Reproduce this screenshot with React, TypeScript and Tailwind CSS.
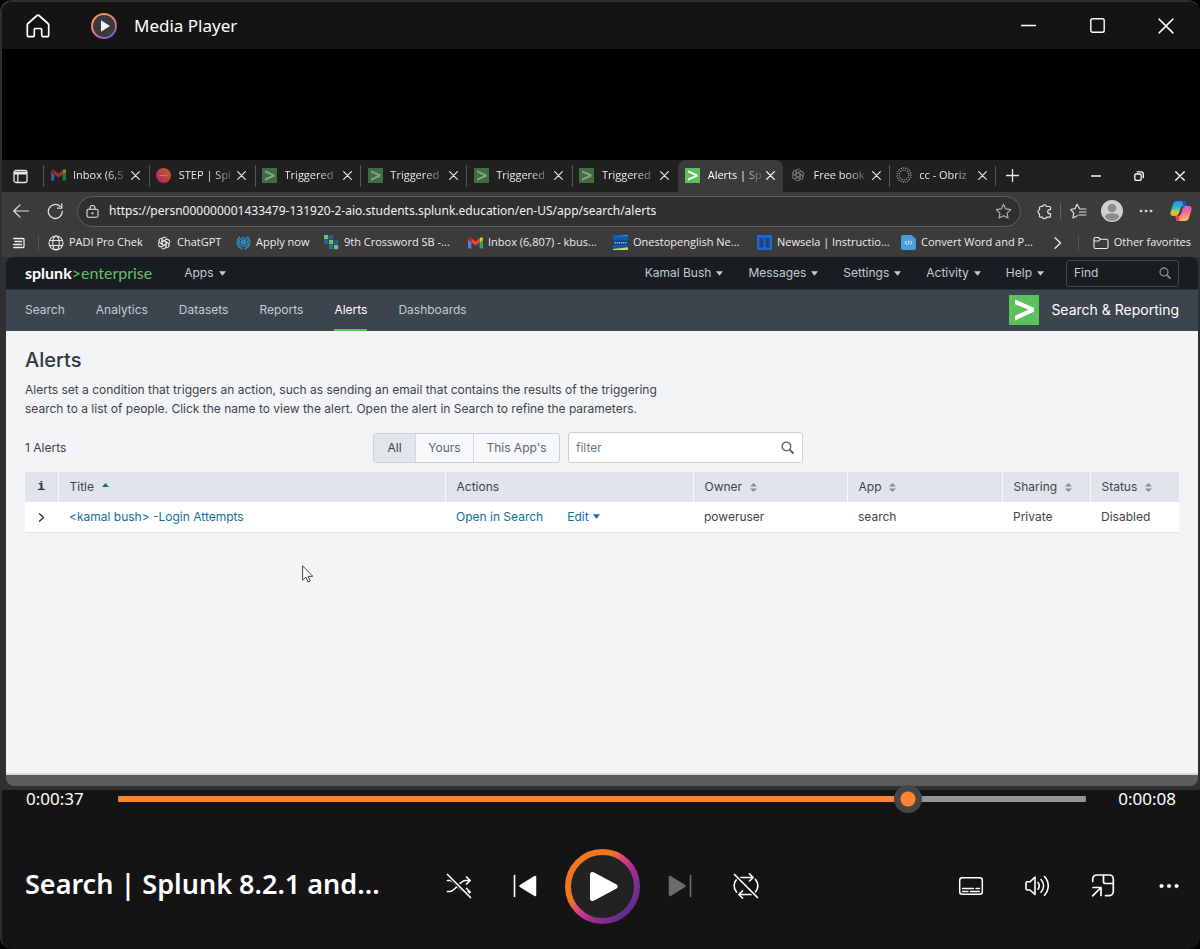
import React from "react";

const UI = "font-['Open_Sans','Noto_Sans',sans-serif]";
const WEB = "font-['Inter','Liberation_Sans',sans-serif]";

type IconProps = { className?: string; children: React.ReactNode; size?: number; box?: number; stroke?: number };

function Icon({ className = "", children, size = 24, box = 24, stroke = 1 }: IconProps) {
  return (
    <svg
      aria-hidden="true"
      width={size}
      height={size}
      viewBox={`0 0 ${box} ${box}`}
      fill="none"
      stroke="currentColor"
      strokeWidth={stroke}
      strokeLinecap="round"
      strokeLinejoin="round"
      className={`shrink-0 ${className}`}
    >
      {children}
    </svg>
  );
}

function CloseIcon({ size = 9, stroke = 1.3 }: { size?: number; stroke?: number }) {
  return (
    <Icon size={size} box={10} stroke={stroke}>
      <path d="M.7.7l8.6 8.6M9.3.7L.7 9.3" />
    </Icon>
  );
}

function Gmail({ dim = false }: { dim?: boolean }) {
  return (
    <svg aria-hidden="true" width="15" height="12" viewBox="0 0 15 12" className={`shrink-0 ${dim ? "opacity-60" : ""}`}>
      <path d="M0 2v8.5c0 .6.4 1 1 1h2.4V4.7z" fill="#4285f4" />
      <path d="M15 2v8.5c0 .6-.4 1-1 1h-2.4V4.7z" fill="#34a853" />
      <path d="M11.6 1.5v3.9L15 2.9V2c0-1.600-1.600-2.200-2.700-1.300z" fill="#fbbc04" />
      <path d="M0 2v.9l3.400 2.500V1.500l-.7-.8C1.600-.2 0 .4 0 2z" fill="#c5221f" />
      <path d="M3.400 5.400V1.300l4.100 3.100 4.100-3.100v4.100L7.500 8.500z" fill="#ea4335" />
    </svg>
  );
}

function SplunkIcon({ dim = false, size = 15 }: { dim?: boolean; size?: number }) {
  return (
    <svg aria-hidden="true" width={size} height={size} viewBox="0 0 30 30" className="shrink-0">
      <path d="M0 0h30v30H0z" fill={dim ? "#3b6f3f" : "#5cc05c"} />
      <path d="M6 4.500L25 12.800v4L6 25.500v-4.700l13.500-6L6 9.200z" fill={dim ? "#8f9a90" : "#fff"} />
    </svg>
  );
}

function Step() {
  return (
    <svg aria-hidden="true" width="15" height="15" viewBox="0 0 15 15" className="shrink-0">
      <defs>
        <linearGradient id="step" x1="0" y1="1" x2="1" y2="0">
          <stop offset="0" stopColor="#a81f68" />
          <stop offset="1" stopColor="#c8641c" />
        </linearGradient>
      </defs>
      <circle cx="7.500" cy="7.500" r="7.500" fill="url(#step)" />
      <path d="M3.500 7.500h8" stroke="#d8906c" strokeWidth="1.200" strokeDasharray="1.300 .6" />
    </svg>
  );
}

function Knot({ dim = false }: { dim?: boolean }) {
  return (
    <Icon size={14} box={24} stroke={1.700} className={dim ? "text-[#777777]" : "text-[#e4e4e4]"}>
      {[0, 60, 120, 180, 240, 300].map((a) => (
        <path key={a} transform={`rotate(${a} 12 12)`} d="M8.500 14V6.500A4.500 4.500 0 0 1 16.800 4M8.500 10l6.500-3.700a4.500 4.500 0 0 1 5 .5" />
      ))}
    </Icon>
  );
}

function Obriz() {
  return (
    <Icon size={16} box={16} stroke={1.300} className="text-[#8c8c8c]">
      <circle cx="8" cy="8" r="7" strokeDasharray=".3 2" />
      <circle cx="8" cy="8" r="4.800" strokeDasharray=".3 2" />
    </Icon>
  );
}

function Globe() {
  return (
    <Icon size={16} box={16} className="text-[#e6e6e6]" stroke={1.100}>
      <circle cx="8" cy="8" r="7" />
      <ellipse cx="8" cy="8" rx="3.200" ry="7" />
      <path d="M1.500 5.500h13M1.500 10.500h13" />
    </Icon>
  );
}

function Nations() {
  return (
    <Icon size={15} box={16} className="text-[#2c86b8]" stroke={1.100}>
      <circle cx="8" cy="7.500" r="4.600" />
      <circle cx="8" cy="7.500" r="2.200" />
      <path d="M8 3v9M3.500 7.500h9M5 4.500l6 6M11 4.500l-6 6" />
      <path d="M3.500 2.500C.3 6 1 12 6 14.500M12.500 2.500c3.200 3.500 2.500 9.500-2.500 12" strokeWidth="2" />
    </Icon>
  );
}

function Crossword() {
  const cells: [number, number, string][] = [
    [0, 0, "#6cbf84"], [5, 0, "#2c5f84"], [5, 5, "#6cbf84"], [0, 5, "#2c5f84"],
    [10, 5, "#2c5f84"], [5, 10, "#2c6f9c"], [10, 10, "#6cbf84"],
  ];
  return (
    <svg aria-hidden="true" width="15" height="15" viewBox="0 0 15 15" className="shrink-0">
      {cells.map(([x, y, c]) => (
        <path key={`${x}-${y}`} d={`M${x} ${y}h4.200v4.200h-4.200z`} fill={c} />
      ))}
    </svg>
  );
}

function Onestop() {
  return (
    <svg aria-hidden="true" width="15" height="15" viewBox="0 0 15 15" className="shrink-0">
      <path d="M0 0h15v15H0z" fill="#0c5cae" />
      <path d="M0 5.500h15v4.500H0z" fill="#0a3f80" />
      <path d="M0 1.500L15 0v1z" fill="#4aa0e0" />
      <path d="M0 15v-1l15-1.800V15z" fill="#b9dc6a" />
      <path d="M1.500 7.800h12" stroke="#b7d3ee" strokeWidth="1.200" strokeDasharray="1.500 .6" />
    </svg>
  );
}

function Newsela() {
  return (
    <svg aria-hidden="true" width="15" height="15" viewBox="0 0 15 15" className="shrink-0">
      <path d="M0 0h15v15H0z" fill="#1b66e0" />
      <path d="M2.500 3h4v9.500h-4zM8.500 3h4v9.500h-4z" fill="#27406e" />
    </svg>
  );
}

function CodeFile() {
  return (
    <svg aria-hidden="true" width="15" height="15" viewBox="0 0 15 15" className="shrink-0">
      <path d="M2 0h8.500L15 4v9a2 2 0 0 1-2 2H2a2 2 0 0 1-2-2V2a2 2 0 0 1 2-2z" fill="#4a9ddb" />
      <path d="M5.500 6L4 7.700l1.500 1.700M9.500 6L11 7.700 9.500 9.400M8 5.800L7 9.600" stroke="#fff" strokeWidth=".9" fill="none" />
    </svg>
  );
}

function Caret() {
  return (
    <svg aria-hidden="true" width="7" height="5" viewBox="0 0 7 5" className="shrink-0 fill-current">
      <path d="M0 .2h7L3.500 4.800z" />
    </svg>
  );
}

function SortIcon() {
  return (
    <svg aria-hidden="true" width="7" height="9" viewBox="0 0 7 9" className="shrink-0 fill-[#818d99]">
      <path d="M0 3.600h7L3.500 0zM0 5.400h7L3.500 9z" />
    </svg>
  );
}

function SearchIcon({ size = 13 }: { size?: number }) {
  return (
    <Icon size={size} box={13} stroke={1.400}>
      <circle cx="5.400" cy="5.400" r="4.300" />
      <path d="M8.700 8.700l3.300 3.300" strokeWidth="2" />
    </Icon>
  );
}

function TitleBar() {
  return (
    <header className="flex h-[47px] items-center bg-[#141414] text-white">
      <button aria-label="Home" className="ml-[18px] flex h-9 w-9 items-center justify-center">
        <Icon size={24} stroke={1.700}>
          <path d="M11 1.500a1.600 1.600 0 0 1 2 0l9 8c.5.400.7 1 .7 1.600V21a1.700 1.700 0 0 1-1.700 1.700h-3.300A1.700 1.700 0 0 1 15.700 21v-5.300c0-.7-.500-1.200-1.200-1.200h-5c-.7 0-1.200.5-1.200 1.200V21a1.700 1.700 0 0 1-1.700 1.700H3A1.700 1.700 0 0 1 1.300 21v-9.900c0-.6.200-1.200.7-1.600z" />
        </Icon>
      </button>
      <svg aria-hidden="true" width="26" height="26" viewBox="0 0 26 26" className="ml-[35px] shrink-0">
        <defs>
          <linearGradient id="app" x1=".2" y1="0" x2=".8" y2="1">
            <stop offset="0" stopColor="#ff9340" />
            <stop offset=".5" stopColor="#d97a8c" />
            <stop offset="1" stopColor="#7a55c8" />
          </linearGradient>
        </defs>
        <circle cx="13" cy="13" r="12" fill="#3a3a3c" stroke="url(#app)" strokeWidth="2" />
        <path d="M10 7.200v11.600l9-5.800z" fill="#f2f2f2" />
      </svg>
      <h1 className="ml-[17px] flex-1 font-['Noto_Sans',sans-serif] text-[17px]">Media Player</h1>
      <button aria-label="Minimize" className="flex h-full w-[69px] items-center justify-center">
        <Icon size={15} box={15} stroke={1.400}><path d="M.5 7.500h14" /></Icon>
      </button>
      <button aria-label="Maximize" className="flex h-full w-[69px] items-center justify-center">
        <Icon size={15} box={15} stroke={1.400}><rect x=".8" y=".8" width="13.400" height="13.400" rx="1.800" /></Icon>
      </button>
      <button aria-label="Close" className="flex h-full w-[68px] items-center justify-center">
        <CloseIcon size={16} stroke={0.900} />
      </button>
    </header>
  );
}

const tabs: { label: string; icon: React.ReactNode; active?: boolean }[] = [
  { label: "Inbox (6,5", icon: <Gmail dim /> },
  { label: "STEP | Spl", icon: <Step /> },
  { label: "Triggered", icon: <SplunkIcon dim /> },
  { label: "Triggered", icon: <SplunkIcon dim /> },
  { label: "Triggered", icon: <SplunkIcon dim /> },
  { label: "Triggered", icon: <SplunkIcon dim /> },
  { label: "Alerts | Sp", icon: <SplunkIcon />, active: true },
  { label: "Free book", icon: <Knot dim /> },
  { label: "cc - Obriz", icon: <Obriz /> },
];

function TabStrip() {
  return (
    <div className="flex h-8 items-center bg-[#202020] text-[#e8e8e8]">
      <button aria-label="Tab actions" className="flex h-8 w-[37px] shrink-0 items-center justify-center">
        <Icon size={15} box={15} stroke={1.300}>
          <rect x="1" y="1.500" width="13" height="12" rx="2" />
          <path d="M1.500 3.500h12M1.500 4.800h12M4.800 5v8.500" />
        </Icon>
      </button>
      <div className="ml-1 flex h-8 min-w-0 max-w-[953px] flex-1 items-center">
        {tabs.map((t, i) => (
          <div
            key={i}
            className={
              t.active
                ? "flex h-8 min-w-0 flex-1 items-center rounded-t-lg border-l border-[#3b3b3b] bg-[#3b3b3b] pr-2 pb-[2px] pl-[6px] text-white"
                : `flex h-[22px] min-w-0 flex-1 items-center border-l pr-2 pb-[2px] pl-[6px] ${tabs[i - 1]?.active ? "border-transparent" : "border-[#555]"}`
            }
          >
            <span className="flex w-4 shrink-0 justify-center">{t.icon}</span>
            <span className="ml-[7px] min-w-0 flex-1 whitespace-nowrap text-[11px] [mask-image:linear-gradient(to_right,black_60%,rgba(0,0,0,0.2)_90%)]">
              {t.label}
            </span>
            <button aria-label="Close tab" className="flex w-[10px] shrink-0 justify-center">
              <CloseIcon />
            </button>
          </div>
        ))}
        <span className="h-5 border-l border-[#555]" />
      </div>
      <button aria-label="New tab" className="flex h-8 w-8 shrink-0 items-center justify-center pb-[2px]">
        <Icon size={13} box={13} stroke={1.300}><path d="M6.500.5v12M.5 6.500h12" /></Icon>
      </button>
      <div className="ml-auto flex shrink-0 text-white">
        <button aria-label="Minimize browser" className="flex h-8 w-[43px] items-center justify-center">
          <Icon size={10} box={10} stroke={1.400}><path d="M.5 5h9" /></Icon>
        </button>
        <button aria-label="Restore browser" className="flex h-8 w-[43px] items-center justify-center">
          <Icon size={10} box={10} stroke={1.300}>
            <rect x=".8" y="3" width="6.400" height="6.400" rx="1.300" />
            <path d="M3.200.8h3.800a2.300 2.300 0 0 1 2.300 2.300v3.600" />
          </Icon>
        </button>
        <button aria-label="Close browser" className="flex h-8 w-10 items-center justify-center">
          <CloseIcon size={10} />
        </button>
      </div>
    </div>
  );
}

function AddressBar() {
  return (
    <div className="flex h-[38px] items-center bg-[#3b3b3b] text-[#e2e2e2]">
      <button aria-label="Back" className="flex h-8 w-[37px] shrink-0 items-center justify-center">
        <Icon size={16} box={16} stroke={1.200}><path d="M15.500 8H1M7 1.800L.8 8 7 14.200" /></Icon>
      </button>
      <button aria-label="Refresh" className="flex h-8 w-[32px] shrink-0 items-center justify-center">
        <Icon size={17} box={17} stroke={1.300}><path d="M15.300 8.500A7 7 0 1 1 13 3.300M14.800 1v4.200h-4.200" /></Icon>
      </button>
      <div className="ml-[6px] flex h-[31px] min-w-0 flex-1 items-center rounded-full border border-[#5e5e5e] bg-[#303030] pl-2 pr-2">
        <Icon size={13} box={13} stroke={1.100}>
          <rect x="1" y="4.300" width="11" height="8" rx="1.500" />
          <path d="M4 4.300V3a2.500 2.500 0 0 1 5 0v1.300" />
          <circle cx="6.500" cy="8.300" r=".5" fill="currentColor" />
        </Icon>
        <label htmlFor="url" className="sr-only">Address</label>
        <input
          id="url"
          className="ml-[10px] min-w-0 flex-1 bg-transparent font-['Noto_Sans',sans-serif] text-[12px] text-[#f2f2f2] outline-none"
          defaultValue="https://persn000000001433479-131920-2-aio.students.splunk.education/en-US/app/search/alerts"
        />
        <button aria-label="Add to favorites" className="text-[#b0b0b0]">
          <Icon size={17} box={17} stroke={1.100}>
            <path d="M8.500 1.300l2.200 4.600 5 .7-3.600 3.500.9 5-4.500-2.400-4.500 2.400.9-5L1.300 6.600l5-.7z" />
          </Icon>
        </button>
      </div>
      <button aria-label="Extensions" className="ml-[15px] shrink-0">
        <Icon size={17} box={17} stroke={1.200}>
          <path d="M4.500 3.500h1.800a2.200 2.200 0 0 1 4.200 0h3a1 1 0 0 1 1 1v2.200h-.8a2 2 0 0 0 0 4h.8v2.500a1 1 0 0 1-1 1h-3a2.200 2.200 0 0 1-4.200 0H4.500a1 1 0 0 1-1-1v-2.500a2.100 2.100 0 0 1 0-4V4.500a1 1 0 0 1 1-1z" />
        </Icon>
      </button>
      <span className="ml-[7px] h-4 border-l border-[#606060]" />
      <button aria-label="Favorites" className="ml-[9px] shrink-0">
        <Icon size={17} box={17} stroke={1.200}>
          <path d="M9.500 5.500L7 1.300 5 5.700l-4.300.8 3 3.300-.7 5.200 4.200-2.300" />
          <path d="M10 6h6M9.500 9h6.500M8.800 12h7.200" />
        </Icon>
      </button>
      <button aria-label="Profile" className="ml-[14px] shrink-0">
        <svg aria-hidden="true" width="22" height="22" viewBox="0 0 22 22">
          <circle cx="11" cy="11" r="11" fill="#cfcfcf" />
          <circle cx="11" cy="8" r="4.300" fill="#8c8c8c" />
          <path d="M4 17c0-3 2.500-3.500 7-3.500s7 .5 7 3.500c-1.500 2.300-4 3.800-7 3.800S5.500 19.300 4 17z" fill="#8c8c8c" />
        </svg>
      </button>
      <button aria-label="Browser menu" className="ml-4 shrink-0">
        <Icon size={14} box={14} stroke={0.500}>
          <g fill="currentColor"><circle cx="2" cy="7" r="1.100" /><circle cx="7" cy="7" r="1.100" /><circle cx="12" cy="7" r="1.100" /></g>
        </Icon>
      </button>
      <button aria-label="Copilot" className="mr-2 ml-[17px] shrink-0">
        <svg aria-hidden="true" width="22" height="20" viewBox="0 0 22 20">
          <defs>
            <linearGradient id="cpa" x1="0" y1="0" x2="0" y2="1">
              <stop offset="0" stopColor="#1a8fe8" /><stop offset=".45" stopColor="#35b6c8" />
              <stop offset=".75" stopColor="#c8d040" /><stop offset="1" stopColor="#f59a2c" />
            </linearGradient>
            <linearGradient id="cpb" x1="0" y1="0" x2=".3" y2="1">
              <stop offset="0" stopColor="#b06cf0" /><stop offset=".5" stopColor="#f0609c" /><stop offset="1" stopColor="#ffb070" />
            </linearGradient>
          </defs>
          <path d="M7 0h6.500c1.500 0 2 1 2.300 2l.7 3h-3c-1.500 0-2.300.8-2.800 2.300L8.500 13c-.5 1.300-1.200 2-2.500 2H3c-2 0-3-1.500-2.500-3.500L3 3C3.700 1 5 0 7 0z" fill="url(#cpa)" />
          <path d="M15 20H8.500c-1.500 0-2-1-2.300-2l-.7-3h2.500c1.500 0 2.300-.8 2.800-2.300L13 7c.5-1.300 1.200-2 2.500-2H19c2 0 3 1.500 2.500 3.500L19 17c-.7 2-2 3-4 3z" fill="url(#cpb)" />
          <path d="M12 0h1.500c1.500 0 2 1 2.300 2l.7 3h-3z" fill="#1d4fc8" />
          <path d="M5.500 15H8.700L9.500 20H8.500c-1.500 0-2-1-2.300-2z" fill="#e8482c" />
        </svg>
      </button>
    </div>
  );
}

const bookmarks: { label: string; icon: React.ReactNode; width: string }[] = [
  { label: "PADI Pro Chek", icon: <Globe />, width: "w-[108px]" },
  { label: "ChatGPT", icon: <Knot />, width: "w-[79px]" },
  { label: "Apply now", icon: <Nations />, width: "w-[88px]" },
  { label: "9th Crossword SB -...", icon: <Crossword />, width: "w-[144px]" },
  { label: "Inbox (6,807) - kbus...", icon: <Gmail />, width: "w-[145px]" },
  { label: "Onestopenglish Ne...", icon: <Onestop />, width: "w-[144px]" },
  { label: "Newsela | Instructio...", icon: <Newsela />, width: "w-[144px]" },
  { label: "Convert Word and P...", icon: <CodeFile />, width: "w-[146px]" },
];

function BookmarksBar() {
  return (
    <nav aria-label="Favorites bar" className="flex h-[27px] items-center bg-[#3b3b3b] pb-[2px] text-[11px] text-[#ededed]">
      <button aria-label="Collections" className="ml-[11px] shrink-0">
        <Icon size={12} box={12} stroke={1.300}><path d="M.7 1.500h9.300a1 1 0 0 1 1 1v7a1 1 0 0 1-1 1H.7M2 4.500h6.500M.7 7.500h7.800" /></Icon>
      </button>
      <span className="mr-[9px] ml-[13px] h-4 border-l border-[#555]" />
      <div className="flex min-w-0 flex-1 items-center overflow-hidden">
        {bookmarks.map((b) => (
          <a key={b.label} href="#" className={`flex shrink-0 items-center gap-[5px] whitespace-nowrap ${b.width}`}>
            <span className="flex w-4 shrink-0 justify-center">{b.icon}</span>
            {b.label}
          </a>
        ))}
      </div>
      <button aria-label="More favorites" className="shrink-0">
        <Icon size={12} box={12} stroke={1.300}><path d="M3 .8L8.500 6 3 11.200" /></Icon>
      </button>
      <span className="ml-[14px] h-4 border-l border-[#555]" />
      <a href="#" className="mr-[9px] ml-[14px] flex shrink-0 items-center gap-[5px] whitespace-nowrap">
        <Icon size={16} box={16} stroke={1.100}>
          <path d="M1 4a1.500 1.500 0 0 1 1.500-1.500h3L7.300 4.200h6.200A1.500 1.500 0 0 1 15 5.700V12a1.500 1.500 0 0 1-1.500 1.500h-11A1.500 1.500 0 0 1 1 12zM1 6h4.800l1.500-1.800" />
        </Icon>
        Other favorites
      </a>
    </nav>
  );
}

const menus = ["Kamal Bush", "Messages", "Settings", "Activity", "Help"];
const sections = ["Search", "Analytics", "Datasets", "Reports", "Alerts", "Dashboards"];

function SplunkHeader() {
  return (
    <>
      <div className="flex h-8 items-center rounded-t-lg bg-[#171d21] px-[19px] text-[12px] text-[#c3cbd4]">
        <a href="#" className="font-['Lato',sans-serif] text-[16px] leading-5 text-[#65c066]">
          <span className="font-bold text-white">splunk</span>&gt;enterprise
        </a>
        <button className="ml-8 flex items-center gap-[5px]">Apps <Caret /></button>
        <div className="ml-auto flex items-center gap-[25px]">
          {menus.map((m) => (
            <button key={m} className="flex items-center gap-[5px] whitespace-nowrap">{m} <Caret /></button>
          ))}
        </div>
        <div className="ml-[22px] flex h-[27px] w-[113px] items-center rounded-[3px] border border-[#3f484f] px-[7px] text-[#818d99]">
          <label htmlFor="find" className="sr-only">Find</label>
          <input id="find" placeholder="Find" className="min-w-0 flex-1 bg-transparent outline-none placeholder:text-[#c3cbd4]" />
          <SearchIcon size={12} />
        </div>
      </div>
      <nav aria-label="App" className="flex h-[42px] items-stretch border-t border-[#2c343b] bg-[#3c444d] px-[19px] text-[12px] text-[#c3cbd4]">
        <div className="flex gap-[31px]">
          {sections.map((s) => (
            <a
              key={s}
              href="#"
              className={
                s === "Alerts"
                  ? "flex items-center border-b-2 border-[#65c066] text-white"
                  : "flex items-center border-b-2 border-transparent"
              }
            >
              {s}
            </a>
          ))}
        </div>
        <a href="#" className="ml-auto flex items-center gap-3 border-b-2 border-transparent text-[14px] text-white">
          <SplunkIcon size={30} />
          Search &amp; Reporting
        </a>
      </nav>
    </>
  );
}

function Th({ children, className = "" }: { children: React.ReactNode; className?: string }) {
  return (
    <th scope="col" className={`border-l border-[#f8f9fa] px-[11px] text-left font-normal ${className}`}>
      {children}
    </th>
  );
}

function Sortable({ label }: { label: string }) {
  return <button className="flex items-center gap-2">{label} <SortIcon /></button>;
}

function AlertsPage() {
  return (
    <section className="relative flex-1 border-b-2 border-[#d6d9db] bg-[#f2f4f5] px-[19px] pt-[16px] text-[12px] text-[#3c444d]">
      <h2 className="text-[20px] leading-[26px] font-medium text-[#2f3940]">Alerts</h2>
      <p className="mt-[7px] max-w-[660px] leading-[19px]">
        Alerts set a condition that triggers an action, such as sending an email that contains the results of the triggering
        <br />
        search to a list of people. Click the name to view the alert. Open the alert in Search to refine the parameters.
      </p>
      <div className="mt-[14px] flex items-center">
        <span className="w-[348px]">1 Alerts</span>
        <div className="flex h-[30px] overflow-hidden rounded-[3px] border border-[#c9d0d8] bg-[#f7f8fa] text-[#5c6773]">
          <button className="w-[41px] bg-[#e1e6eb] text-[#3c444d]">All</button>
          <button className="w-[58px] border-l border-[#d3d8de]">Yours</button>
          <button className="w-[86px] border-l border-[#d3d8de]">This App&apos;s</button>
        </div>
        <div className="ml-2 flex h-[31px] w-[235px] items-center rounded-[3px] border border-[#c9d0d8] bg-white pr-2 pl-[7px] text-[#5c6773]">
          <label htmlFor="filter" className="sr-only">Filter alerts</label>
          <input id="filter" placeholder="filter" className="min-w-0 flex-1 bg-transparent outline-none placeholder:text-[#6b7785]" />
          <SearchIcon />
        </div>
      </div>
      <table className="mt-[9px] w-full table-fixed border-collapse">
        <colgroup>
          <col className="w-[33px]" />
          <col />
          <col className="w-[248px]" />
          <col className="w-[154px]" />
          <col className="w-[155px]" />
          <col className="w-[88px]" />
          <col className="w-[89px]" />
        </colgroup>
        <thead>
          <tr className="h-[30px] bg-[#e1e5eb]">
            <th scope="col" className="text-center font-['Liberation_Mono',monospace] text-[13px] font-bold text-[#2b3033]">i</th>
            <Th>
              <button className="flex items-center gap-2">
                Title
                <svg aria-hidden="true" width="7" height="4" viewBox="0 0 7 4" className="mb-1 fill-[#0c6c9c]"><path d="M0 4h7L3.500 0z" /></svg>
              </button>
            </Th>
            <Th>Actions</Th>
            <Th><Sortable label="Owner" /></Th>
            <Th><Sortable label="App" /></Th>
            <Th><Sortable label="Sharing" /></Th>
            <Th><Sortable label="Status" /></Th>
          </tr>
        </thead>
        <tbody>
          <tr className="h-[30px] border-b border-[#e1e5eb] bg-white">
            <td className="text-center">
              <button aria-label="Expand row" className="align-middle text-[#2b3033]">
                <Icon size={9} box={9} stroke={1.300}><path d="M2.500.8L6.500 4.500l-4 3.700" /></Icon>
              </button>
            </td>
            <td className="px-[11px]"><a href="#" className="text-[#0f6e9f]">&lt;kamal bush&gt; -Login Attempts</a></td>
            <td className="px-[11px]">
              <div className="flex items-center gap-6 text-[#0f6e9f]">
                <a href="#">Open in Search</a>
                <button className="flex items-center gap-1">Edit <Caret /></button>
              </div>
            </td>
            <td className="px-[11px]">poweruser</td>
            <td className="px-[11px]">search</td>
            <td className="px-[11px]">Private</td>
            <td className="px-[11px]">Disabled</td>
          </tr>
        </tbody>
      </table>
      <svg aria-hidden="true" width="12" height="18" viewBox="0 0 12 18" className="absolute top-[234px] left-[296px]">
        <path d="M.6.800v14.400l3.300-3.100 2.100 5 2.200-1-2.100-4.800h4.700z" fill="#fff" stroke="#333" strokeWidth=".9" />
      </svg>
    </section>
  );
}

const ctl = "flex h-12 w-[52px] shrink-0 items-center justify-center";

function Controls() {
  const position = 826;
  const track = {
    background: `linear-gradient(to right, #ff8432 ${position / 10}%, #959595 ${position / 10}%) center / 100% 6px no-repeat`,
  };
  return (
    <footer className="bg-[#141414] text-white">
      <div className="flex h-[18px] items-center px-6 font-['Noto_Sans',sans-serif] text-[17px]">
        <label htmlFor="seek" className="w-[92px] shrink-0">0:00:37</label>
        <input
          id="seek"
          type="range"
          min={0}
          max={1000}
          defaultValue={position}
          style={track}
          className="relative h-7 min-w-0 flex-1 appearance-none rounded-full [&::-webkit-slider-thumb]:h-7 [&::-webkit-slider-thumb]:w-7 [&::-webkit-slider-thumb]:appearance-none [&::-webkit-slider-thumb]:rounded-full [&::-webkit-slider-thumb]:bg-[radial-gradient(circle,#ff8432_7px,#454545_8px)]"
        />
        <span className="w-[90px] shrink-0 text-right">0:00:08</span>
      </div>
      <div className="grid h-[141px] grid-cols-[1fr_auto_1fr] items-center pt-[22px] pr-[5px] pb-[7px] pl-2">
        <h2 className="truncate pb-1 pl-[15px] font-['Noto_Sans',sans-serif] text-[27px] font-semibold">Search | Splunk 8.2.1 and...</h2>
        <div className="flex items-center gap-[14px]">
          <button aria-label="Shuffle off" className={ctl}>
            <Icon size={26} box={26} stroke={1.700}>
              <path d="M1.500 7.500h2c6 0 10 11.500 16 11.500h4.500M1.500 18.500h2c6 0 10-11 16-11H24M20.500 4l3.700 3.500-3.700 3.500M20.500 15.500l3.700 3.500-3.700 3" />
              <path d="M1 1l24 24" stroke="#141414" strokeWidth="4" />
              <path d="M1.500 1.500l23 23" />
            </Icon>
          </button>
          <button aria-label="Previous" className={ctl}>
            <Icon size={24} stroke={1.600}>
              <path d="M1.500 1.500v21" />
              <path d="M22 3v18L7.500 12z" fill="currentColor" strokeWidth="2.500" />
            </Icon>
          </button>
          <button aria-label="Play" className="shrink-0">
            <svg aria-hidden="true" width="75" height="75" viewBox="0 0 75 75">
              <defs>
                <linearGradient id="ring" x1=".1" y1=".15" x2=".9" y2=".85">
                  <stop offset=".3" stopColor="#f07622" />
                  <stop offset=".48" stopColor="#d83f83" />
                  <stop offset=".65" stopColor="#a82c90" />
                  <stop offset="1" stopColor="#5f2e88" />
                </linearGradient>
              </defs>
              <circle cx="37.500" cy="37.500" r="34.500" fill="#222" stroke="url(#ring)" strokeWidth="6" />
              <path d="M27.500 25.500v24L50 37.500z" fill="#fff" stroke="#fff" strokeWidth="5" strokeLinejoin="round" />
            </svg>
          </button>
          <button aria-label="Next" disabled className={`${ctl} text-[#6b6b6b]`}>
            <Icon size={24} stroke={1.600}>
              <path d="M22.500 1.500v21" />
              <path d="M2 3v18l14.500-9z" fill="currentColor" strokeWidth="2.500" />
            </Icon>
          </button>
          <button aria-label="Repeat off" className={ctl}>
            <Icon size={26} box={26} stroke={1.700}>
              <path d="M7 4.500h13M16.500 1l3.700 3.500L16.500 8M19 21.500H6M9.500 18l-3.700 3.500L9.500 25M3.500 6.500a9.500 9.500 0 0 0 0 12.500M22.500 19a9.500 9.500 0 0 0 0-12.500" />
              <path d="M1 1l24 24" stroke="#141414" strokeWidth="4" />
              <path d="M1.500 1.500l23 23" />
            </Icon>
          </button>
        </div>
        <div className="flex items-center justify-end gap-[14px]">
          <button aria-label="Subtitles" className={ctl}>
            <Icon size={26} box={26} stroke={1.500}>
              <rect x="1.700" y="4.700" width="22.600" height="16.600" rx="2.500" />
              <path d="M4.500 15.500H15.500M18 15.500h3.500M4.500 18.500h5.500M12.500 18.500h9" strokeWidth="1.300" />
            </Icon>
          </button>
          <button aria-label="Volume" className={ctl}>
            <Icon size={26} box={26} stroke={1.600}>
              <path d="M11 4v17.500L6 17H3.200A1.200 1.200 0 0 1 2 15.800V10a1.200 1.200 0 0 1 1.200-1.200H6zM14 9.500c1.500 2 1.500 4.700 0 6.700M17 6.500c3.500 3.700 3.500 9 0 12.700M20.500 3.500c5 5.500 5 13.200 0 18.700" />
            </Icon>
          </button>
          <button aria-label="Mini player" className={ctl}>
            <Icon size={26} box={26} stroke={1.700}>
              <path d="M2.700 8.500V6a4 4 0 0 1 4-4h12.600a4 4 0 0 1 4 4v12.600a4 4 0 0 1-4 4H15.500M13.500 2v6.500a2 2 0 0 0 2 2h7.800M3 14.500h8v8M11 14.500l-8.300 8.300" />
            </Icon>
          </button>
          <button aria-label="More" className={ctl}>
            <Icon size={24} stroke={0.500}>
              <g fill="currentColor"><circle cx="4.500" cy="12" r="1.800" /><circle cx="12" cy="12" r="1.800" /><circle cx="19.500" cy="12" r="1.800" /></g>
            </Icon>
          </button>
        </div>
      </div>
    </footer>
  );
}

export default function App() {
  return (
    <div className="min-h-screen w-full bg-black">
      <div className={`flex min-h-screen flex-col overflow-hidden rounded-xl border-t-2 border-l-2 border-[#2f2f2f] bg-black ${UI}`}>
        <TitleBar />
        <main className="flex flex-1 flex-col pt-[111px]">
          <TabStrip />
          <AddressBar />
          <BookmarksBar />
          <div className="flex flex-1 flex-col bg-[#303030] pr-[2px] pb-1 pl-1">
            <div className={`flex flex-1 flex-col ${WEB}`}>
              <SplunkHeader />
              <AlertsPage />
              <div className="h-[11px] rounded-b-lg bg-[#5b5d5c]" />
            </div>
          </div>
        </main>
        <Controls />
      </div>
    </div>
  );
}
